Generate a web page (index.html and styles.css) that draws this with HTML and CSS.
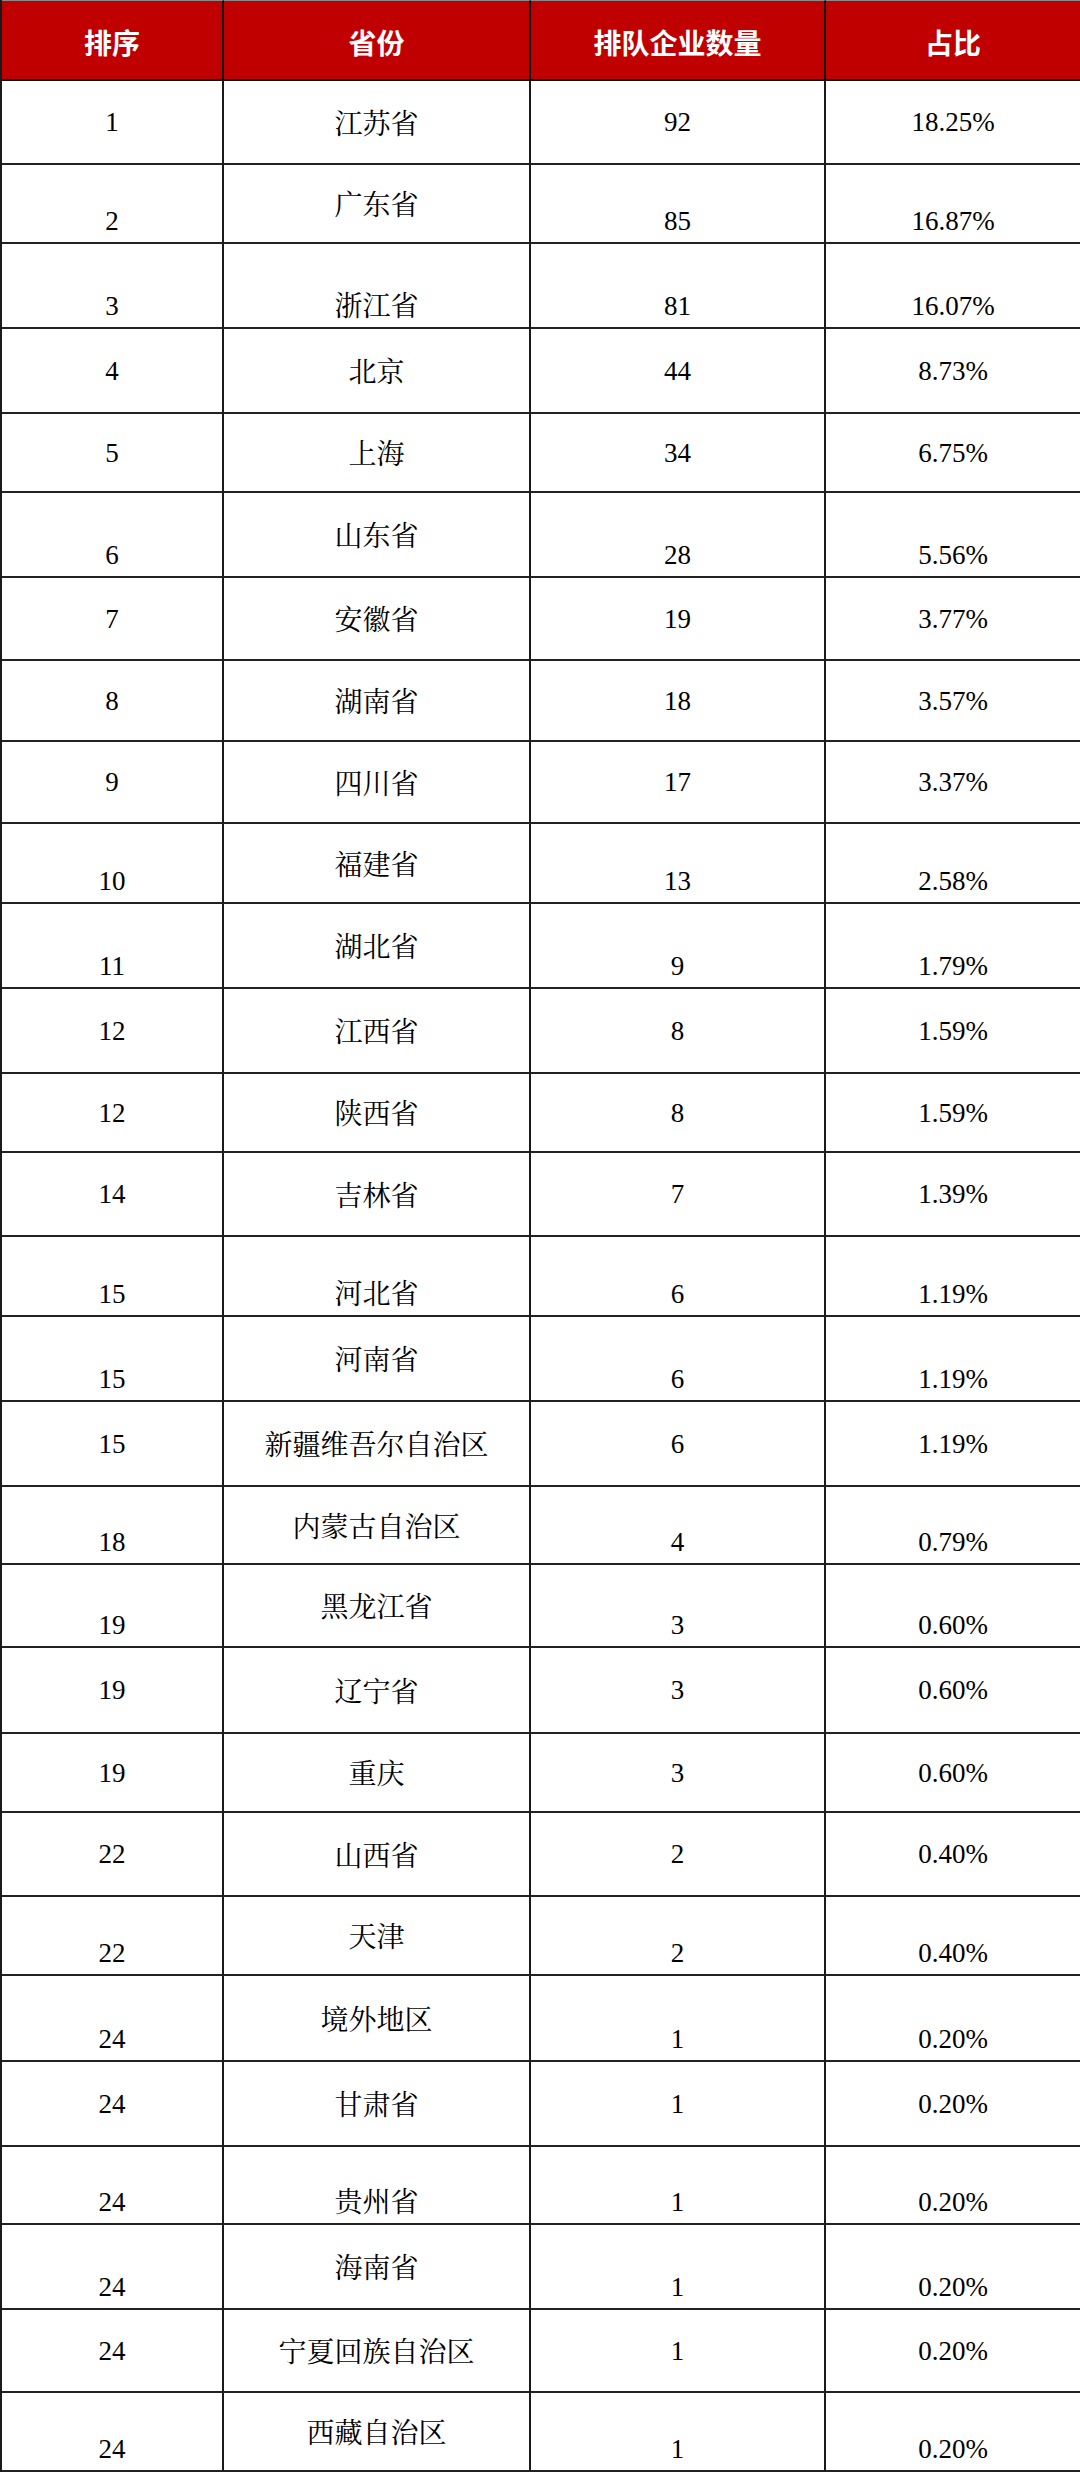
FILE: index.html
```html
<!DOCTYPE html>
<html lang="zh-CN">
<head>
<meta charset="utf-8">
<title>排队企业数量省份分布</title>
<link rel="stylesheet" href="styles.css">
</head>
<body>
<table class="rank-table">
  <colgroup>
    <col class="c-rank"><col class="c-prov"><col class="c-num"><col class="c-pct">
  </colgroup>
  <thead>
    <tr class="head"><th>排序</th><th>省份</th><th>排队企业数量</th><th>占比</th></tr>
  </thead>
  <tbody>
    <tr class="h84"><td class="n">1</td><td class="p">江苏省</td><td class="n">92</td><td class="n">18.25%</td></tr>
    <tr class="h79 nb"><td class="n">2</td><td class="p">广东省</td><td class="n">85</td><td class="n">16.87%</td></tr>
    <tr class="h85 ab"><td class="n">3</td><td class="p">浙江省</td><td class="n">81</td><td class="n">16.07%</td></tr>
    <tr class="h85"><td class="n">4</td><td class="p">北京</td><td class="n">44</td><td class="n">8.73%</td></tr>
    <tr class="h79"><td class="n">5</td><td class="p">上海</td><td class="n">34</td><td class="n">6.75%</td></tr>
    <tr class="h85 nb"><td class="n">6</td><td class="p">山东省</td><td class="n">28</td><td class="n">5.56%</td></tr>
    <tr class="h83"><td class="n">7</td><td class="p">安徽省</td><td class="n">19</td><td class="n">3.77%</td></tr>
    <tr class="h81"><td class="n">8</td><td class="p">湖南省</td><td class="n">18</td><td class="n">3.57%</td></tr>
    <tr class="h82"><td class="n">9</td><td class="p">四川省</td><td class="n">17</td><td class="n">3.37%</td></tr>
    <tr class="h80 nb"><td class="n">10</td><td class="p">福建省</td><td class="n">13</td><td class="n">2.58%</td></tr>
    <tr class="h85 nb"><td class="n">11</td><td class="p">湖北省</td><td class="n">9</td><td class="n">1.79%</td></tr>
    <tr class="h85"><td class="n">12</td><td class="p">江西省</td><td class="n">8</td><td class="n">1.59%</td></tr>
    <tr class="h79"><td class="n">12</td><td class="p">陕西省</td><td class="n">8</td><td class="n">1.59%</td></tr>
    <tr class="h84"><td class="n">14</td><td class="p">吉林省</td><td class="n">7</td><td class="n">1.39%</td></tr>
    <tr class="h80 ab"><td class="n">15</td><td class="p">河北省</td><td class="n">6</td><td class="n">1.19%</td></tr>
    <tr class="h85 nb"><td class="n">15</td><td class="p">河南省</td><td class="n">6</td><td class="n">1.19%</td></tr>
    <tr class="h85"><td class="n">15</td><td class="p">新疆维吾尔自治区</td><td class="n">6</td><td class="n">1.19%</td></tr>
    <tr class="h78 nb"><td class="n">18</td><td class="p">内蒙古自治区</td><td class="n">4</td><td class="n">0.79%</td></tr>
    <tr class="h83 nb"><td class="n">19</td><td class="p">黑龙江省</td><td class="n">3</td><td class="n">0.60%</td></tr>
    <tr class="h86"><td class="n">19</td><td class="p">辽宁省</td><td class="n">3</td><td class="n">0.60%</td></tr>
    <tr class="h79"><td class="n">19</td><td class="p">重庆</td><td class="n">3</td><td class="n">0.60%</td></tr>
    <tr class="h84"><td class="n">22</td><td class="p">山西省</td><td class="n">2</td><td class="n">0.40%</td></tr>
    <tr class="h79 nb"><td class="n">22</td><td class="p">天津</td><td class="n">2</td><td class="n">0.40%</td></tr>
    <tr class="h86 nb"><td class="n">24</td><td class="p">境外地区</td><td class="n">1</td><td class="n">0.20%</td></tr>
    <tr class="h85"><td class="n">24</td><td class="p">甘肃省</td><td class="n">1</td><td class="n">0.20%</td></tr>
    <tr class="h78 ab"><td class="n">24</td><td class="p">贵州省</td><td class="n">1</td><td class="n">0.20%</td></tr>
    <tr class="h85 nb"><td class="n">24</td><td class="p">海南省</td><td class="n">1</td><td class="n">0.20%</td></tr>
    <tr class="h83"><td class="n">24</td><td class="p">宁夏回族自治区</td><td class="n">1</td><td class="n">0.20%</td></tr>
    <tr class="h79 nb"><td class="n">24</td><td class="p">西藏自治区</td><td class="n">1</td><td class="n">0.20%</td></tr>
  </tbody>
</table>
</body>
</html>
```
FILE: styles.css
```css
html, body {
  margin: 0;
  padding: 0;
  background: #ffffff;
}

.rank-table {
  width: 1080px;
  table-layout: fixed;
  border-collapse: separate;
  border-spacing: 0;
  border-left: 2px solid #1a1a1a;
}

.c-rank { width: 222px; }
.c-prov { width: 307px; }
.c-num  { width: 295px; }
.c-pct  { width: 256px; }

.rank-table th,
.rank-table td {
  padding: 0;
  text-align: center;
  vertical-align: middle;
  border-right: 2px solid #1a1a1a;
  border-bottom: 2px solid #222222;
  box-sizing: border-box;
}

.head { height: 81px; }

.rank-table th {
  background: #c00000;
  color: #ffffff;
  font-family: "Noto Sans CJK SC", "Noto Sans", sans-serif;
  font-weight: 700;
  font-size: 28px;
  line-height: 34px;
  padding-top: 4px;
  border-top: 1px solid #8a8a8a;
  border-right-color: #111111;
  border-bottom-color: #111111;
}

.rank-table td {
  color: #000000;
  font-family: "Liberation Serif", "Noto Serif CJK SC", "Noto Sans CJK SC", serif;
  font-size: 27px;
  line-height: 34px;
}

.rank-table td.p {
  font-size: 28px;
  padding-top: 5px;
}

.rank-table tr.nb td.n,
.rank-table tr.ab td {
  vertical-align: bottom;
  padding-bottom: 4px;
}

.rank-table tr.ab td.p {
  padding-top: 0;
  padding-bottom: 3px;
}

.h78 { height: 78px; }
.h79 { height: 79px; }
.h80 { height: 80px; }
.h81 { height: 81px; }
.h82 { height: 82px; }
.h83 { height: 83px; }
.h84 { height: 84px; }
.h85 { height: 85px; }
.h86 { height: 86px; }
```
